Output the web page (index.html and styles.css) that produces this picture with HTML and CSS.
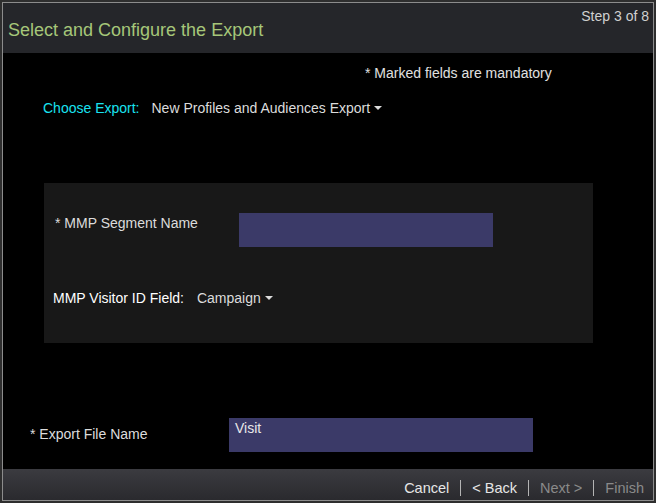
FILE: index.html
```html
<!DOCTYPE html>
<html>
<head>
<meta charset="utf-8">
<link rel="stylesheet" href="styles.css">
</head>
<body>
<div class="frame">
  <div class="header">
    <div class="title">Select and Configure the Export</div>
    <div class="step">Step 3 of 8</div>
  </div>
  <div class="main">
    <div class="mandatory">* Marked fields are mandatory</div>
    <div class="choose">
      <span class="choose-label">Choose Export:</span>
      <span class="dropdown">New Profiles and Audiences Export <span class="caret"></span></span>
    </div>
    <div class="panel">
      <div class="seg-row">
        <div class="seg-label">* MMP Segment Name</div>
        <div class="input seg-input"></div>
      </div>
      <div class="visitor-row">
        <span class="visitor-label">MMP Visitor ID Field:</span>
        <span class="dropdown">Campaign <span class="caret"></span></span>
      </div>
    </div>
    <div class="file-row">
      <div class="file-label">* Export File Name</div>
      <div class="input file-input">Visit</div>
    </div>
  </div>
  <div class="footer">
    <span class="btn">Cancel</span>
    <span class="sep"></span>
    <span class="btn">&lt; Back</span>
    <span class="sep"></span>
    <span class="btn disabled">Next &gt;</span>
    <span class="sep"></span>
    <span class="btn disabled">Finish</span>
  </div>
</div>
</body>
</html>
```
FILE: styles.css
```css
html, body {
  margin: 0;
  padding: 0;
}
body {
  width: 656px;
  height: 503px;
  background: #2e2e2e;
  font-family: "Liberation Sans", Arial, sans-serif;
  font-size: 14px;
  color: #dcdcdc;
  overflow: hidden;
}
.frame {
  box-sizing: border-box;
  width: 652px;
  height: 499px;
  margin: 2px 0 0 2px;
  border: 1px solid #8c8c8c;
  background: #000;
  display: flex;
  flex-direction: column;
}
.header {
  height: 50px;
  background: #25262a;
  display: flex;
  justify-content: space-between;
  align-items: flex-start;
}
.title {
  color: #a6c779;
  font-size: 18px;
  line-height: 20px;
  margin: 17px 0 0 5px;
}
.step {
  color: #d0d0d0;
  font-size: 14px;
  line-height: 16px;
  margin: 5px 4px 0 0;
}
.main {
  flex: 1;
  display: flex;
  flex-direction: column;
}
.mandatory {
  font-size: 14px;
  line-height: 16px;
  margin: 12px 0 0 362px;
  color: #e0e0e0;
}
.choose {
  display: flex;
  align-items: center;
  margin: 19px 0 0 40px;
  font-size: 14px;
  line-height: 16px;
}
.choose-label {
  color: #19e3f0;
  margin-right: 12px;
}
.dropdown {
  color: #dcdcdc;
  display: inline-flex;
  align-items: center;
}
.caret {
  display: inline-block;
  width: 0;
  height: 0;
  margin-left: 4px;
  border-left: 4px solid transparent;
  border-right: 4px solid transparent;
  border-top: 4px solid #dcdcdc;
}
.panel {
  margin: 67px 0 0 41px;
  width: 549px;
  height: 160px;
  background: #181818;
  box-sizing: border-box;
  padding: 30px 0 0 11px;
}
.seg-row {
  display: grid;
  grid-template-columns: 184px 254px;
  align-items: start;
}
.seg-label {
  font-size: 14px;
  line-height: 16px;
  padding-top: 2px;
  color: #dcdcdc;
}
.input {
  height: 34px;
  background: #3b3a68;
  box-sizing: border-box;
}
.visitor-row {
  display: flex;
  align-items: center;
  margin: 43px 0 0 -2px;
  font-size: 14px;
  line-height: 16px;
}
.visitor-label {
  color: #ffffff;
  margin-right: 13px;
}
.file-row {
  display: grid;
  grid-template-columns: 199px 304px;
  align-items: start;
  margin: 75px 0 0 27px;
}
.file-label {
  font-size: 14px;
  line-height: 16px;
  padding-top: 8px;
  color: #dcdcdc;
}
.file-input {
  font-size: 14px;
  line-height: 16px;
  padding: 2px 6px;
  color: #e8e8e8;
}
.footer {
  height: 31px;
  box-sizing: border-box;
  background: linear-gradient(#3b3b40, #2a2a2e);
  display: flex;
  justify-content: flex-end;
  align-items: center;
  padding: 6px 9px 0 0;
  gap: 11px;
  font-size: 14.5px;
}
.btn {
  color: #e6e6e6;
}
.btn.disabled {
  color: #8a8a8a;
}
.sep {
  width: 1px;
  height: 16px;
  background: #b4b4b4;
}
```
